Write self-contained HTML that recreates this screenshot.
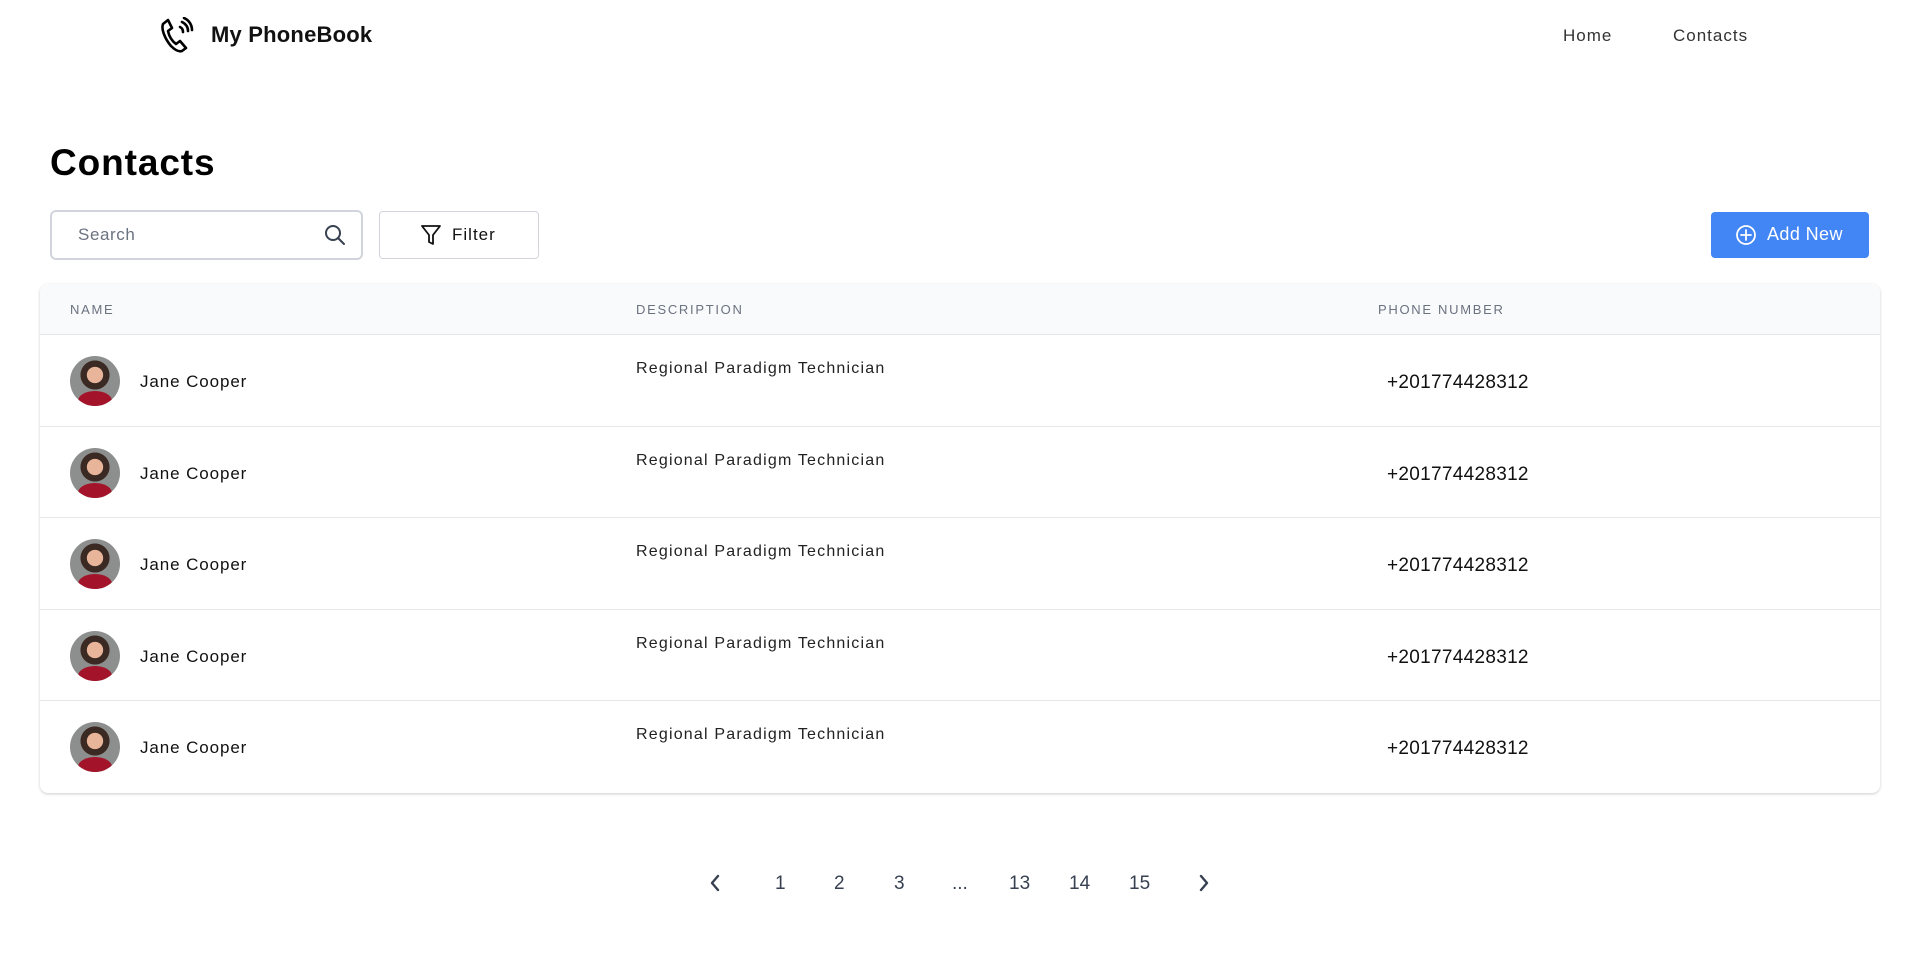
<!DOCTYPE html>
<html><head><meta charset="utf-8">
<style>
*{box-sizing:border-box;margin:0;padding:0}
body{width:1920px;height:972px;background:#fff;font-family:"Liberation Sans",sans-serif;color:#111;position:relative;overflow:hidden}
.abs{position:absolute}
.brand{left:211px;top:22px;font-size:22px;font-weight:bold;color:#111;letter-spacing:0.2px}
.nav{top:26px;font-size:17px;color:#333;letter-spacing:1px}
h1{position:absolute;left:50px;top:142px;font-size:37px;font-weight:bold;color:#000;letter-spacing:0.9px}
.search{left:50px;top:210px;width:313px;height:50px;border:2px solid #d1d5db;border-radius:6px}
.search span{position:absolute;left:26px;top:13px;font-size:17px;color:#6b7280;letter-spacing:0.6px}
.filter{left:379px;top:211px;width:160px;height:48px;border:1px solid #d1d5db;border-radius:4px}
.filter span{position:absolute;left:72px;top:13px;font-size:17px;color:#111;letter-spacing:1px}
.add{left:1711px;top:212px;width:158px;height:46px;background:#4285f4;border-radius:4px;color:#fff}
.add span{position:absolute;left:56px;top:12px;font-size:18px;letter-spacing:0.4px}
.card{left:40px;top:284px;width:1840px;height:509px;border-radius:8px;box-shadow:0 1px 3px rgba(0,0,0,.15),0 1px 2px rgba(0,0,0,.06);overflow:hidden;background:#fff}
.head{height:51px;background:#f9fafb;border-bottom:1px solid #e5e7eb;position:relative}
.head div{position:absolute;top:18px;font-size:13px;letter-spacing:1.7px;color:#6b7280}
.row{height:91.6px;border-bottom:1px solid #e5e7eb;position:relative}
.row:last-child{border-bottom:none}
.av{position:absolute;left:30px;top:21px;width:50px;height:50px;border-radius:50%;overflow:hidden;background:radial-gradient(circle at 50% 38%,#e8b49a 0 20%,#3b2a24 21% 36%,#8d8f8e 37%)}
.av:after{content:"";position:absolute;left:8px;top:35px;width:34px;height:20px;border-radius:50% 50% 0 0;background:#a3142a}
.nm{position:absolute;left:100px;top:37px;font-size:17px;color:#111;letter-spacing:0.9px}
.ds{position:absolute;left:596px;top:25px;font-size:16px;color:#222;letter-spacing:1.2px}
.ph{position:absolute;left:1347px;top:37px;font-size:19px;color:#111;letter-spacing:0.3px}
.pg{top:873px;font-size:19px;color:#374151}
</style></head><body>
<svg class="abs" style="left:160px;top:17px" width="34" height="36" viewBox="0 0 34 36" fill="none" stroke="#000" stroke-width="2.6" stroke-linejoin="round" stroke-linecap="round">
<path d="M8 3 L3 7 C1 12 5 22 11 29 C15 33 19 35 22 34 L26 31 L20 24 L16 27 C12 24 9 19 8 14 L12 11 Z"/>
<path d="M20 10 C22 11 23 13 23 15" />
<path d="M22 5 C26 7 28 10 28 14"/>
<path d="M24 1 C29 3 32 8 32 13"/>
</svg>
<div class="abs brand">My PhoneBook</div>
<div class="abs nav" style="left:1563px">Home</div>
<div class="abs nav" style="left:1673px">Contacts</div>
<h1>Contacts</h1>
<div class="abs search"><span>Search</span>
<svg class="abs" style="left:272px;top:12px" width="22" height="22" viewBox="0 0 22 22" fill="none" stroke="#374151" stroke-width="2" stroke-linecap="round"><circle cx="9" cy="9" r="7"/><path d="M14 14 L20 20"/></svg></div>
<div class="abs filter">
<svg class="abs" style="left:41px;top:12px" width="20" height="22" viewBox="0 0 20 22" fill="none" stroke="#111" stroke-width="1.8" stroke-linejoin="round"><path d="M1 2 H19 L12 11 V20 L8 18 V11 Z"/></svg>
<span>Filter</span></div>
<div class="abs add">
<svg class="abs" style="left:24px;top:12px" width="22" height="22" viewBox="0 0 22 22" fill="none" stroke="#fff" stroke-width="1.8" stroke-linecap="round"><circle cx="11" cy="11" r="9"/><path d="M11 6 V16 M6 11 H16"/></svg>
<span>Add New</span></div>
<div class="abs card">
<div class="head"><div style="left:30px">NAME</div><div style="left:596px">DESCRIPTION</div><div style="left:1338px">PHONE NUMBER</div></div>
<div class="row"><div class="av"></div><div class="nm">Jane Cooper</div><div class="ds">Regional Paradigm Technician</div><div class="ph">+201774428312</div></div>
<div class="row"><div class="av"></div><div class="nm">Jane Cooper</div><div class="ds">Regional Paradigm Technician</div><div class="ph">+201774428312</div></div>
<div class="row"><div class="av"></div><div class="nm">Jane Cooper</div><div class="ds">Regional Paradigm Technician</div><div class="ph">+201774428312</div></div>
<div class="row"><div class="av"></div><div class="nm">Jane Cooper</div><div class="ds">Regional Paradigm Technician</div><div class="ph">+201774428312</div></div>
<div class="row"><div class="av"></div><div class="nm">Jane Cooper</div><div class="ds">Regional Paradigm Technician</div><div class="ph">+201774428312</div></div>
</div>
<svg class="abs" style="left:708px;top:873px" width="14" height="20" viewBox="0 0 14 20" fill="none" stroke="#374151" stroke-width="2.4" stroke-linecap="round" stroke-linejoin="round"><path d="M10 3 L4 10 L10 17"/></svg>
<div class="abs pg" style="left:775px">1</div>
<div class="abs pg" style="left:834px">2</div>
<div class="abs pg" style="left:894px">3</div>
<div class="abs pg" style="left:952px">...</div>
<div class="abs pg" style="left:1009px">13</div>
<div class="abs pg" style="left:1069px">14</div>
<div class="abs pg" style="left:1129px">15</div>
<svg class="abs" style="left:1197px;top:873px" width="14" height="20" viewBox="0 0 14 20" fill="none" stroke="#374151" stroke-width="2.4" stroke-linecap="round" stroke-linejoin="round"><path d="M4 3 L10 10 L4 17"/></svg>
</body></html>
